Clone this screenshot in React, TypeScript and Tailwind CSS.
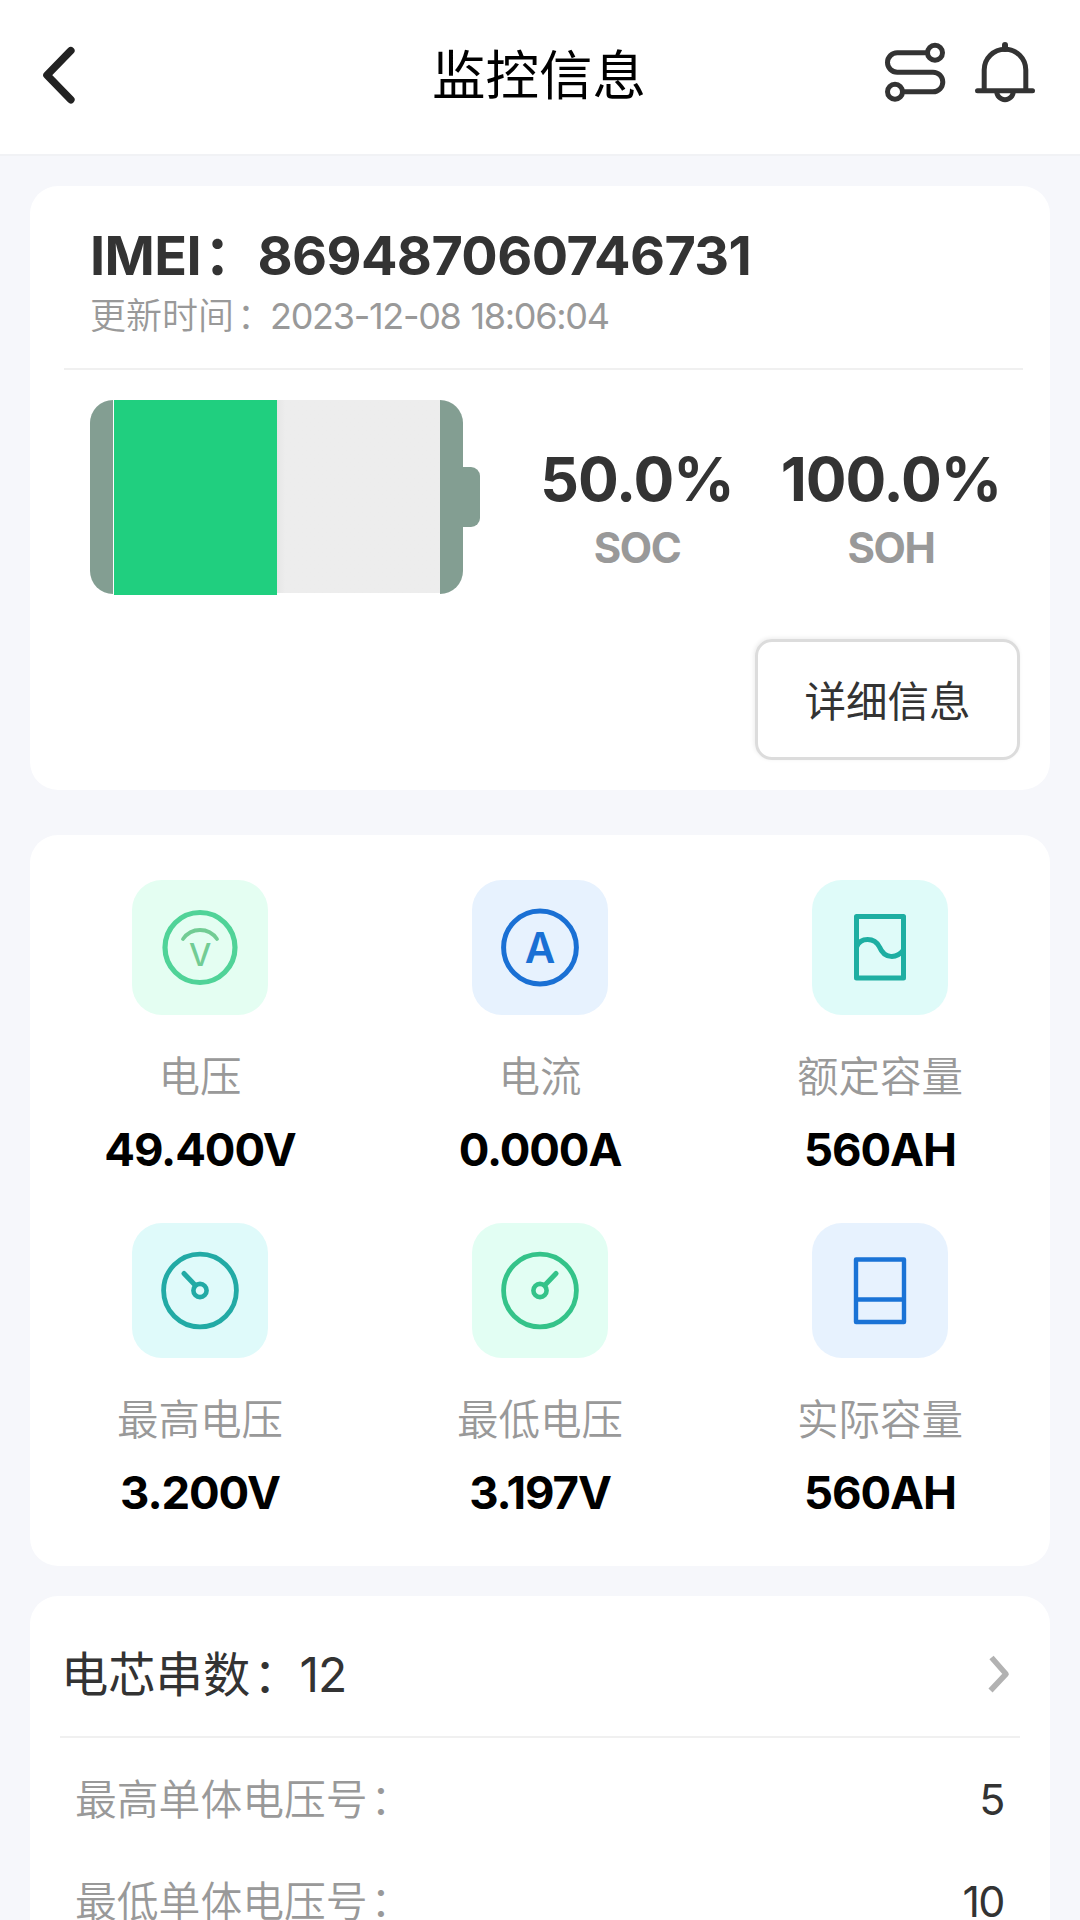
import React from "react";

type Metric = {
  label: string;
  value: string;
  tile: string;
  icon: React.ReactNode;
};

const metrics: Metric[] = [
  {
    label: "电压",
    value: "49.400V",
    tile: "bg-[#e4fef2]",
    icon: <VoltageIcon />,
  },
  {
    label: "电流",
    value: "0.000A",
    tile: "bg-[#e7f2fe]",
    icon: <CurrentIcon />,
  },
  {
    label: "额定容量",
    value: "560AH",
    tile: "bg-[#dffbf9]",
    icon: <RatedIcon />,
  },
  {
    label: "最高电压",
    value: "3.200V",
    tile: "bg-[#dffafa]",
    icon: <GaugeIcon color="#22aaa5" />,
  },
  {
    label: "最低电压",
    value: "3.197V",
    tile: "bg-[#e2fef3]",
    icon: <GaugeIcon color="#34c389" flip />,
  },
  {
    label: "实际容量",
    value: "560AH",
    tile: "bg-[#e7f2fe]",
    icon: <ActualIcon />,
  },
];

const cells = [
  { label: "最高单体电压号", value: "5" },
  { label: "最低单体电压号", value: "10" },
];

function VoltageIcon() {
  return (
    <svg width="136" height="135" viewBox="0 0 136 135" fill="none">
      <circle cx="68" cy="67.5" r="35" stroke="#50d398" strokeWidth="5.2" />
      <path
        d="M51 59C59.5 47 76.5 47 85 59"
        stroke="#72cc94"
        strokeWidth="3.8"
        strokeLinecap="round"
      />
      <text x="68.2" y="86.2" textAnchor="middle" fontSize="31.5" fontWeight="500" fill="#72cc94">
        V
      </text>
    </svg>
  );
}

function CurrentIcon() {
  return (
    <svg width="136" height="135" viewBox="0 0 136 135" fill="none">
      <circle cx="68" cy="67.5" r="36.4" stroke="#1a70d4" strokeWidth="5" />
      <text x="68" y="83" textAnchor="middle" fontSize="42" fontWeight="600" fill="#1a70d4">
        A
      </text>
    </svg>
  );
}

function RatedIcon() {
  return (
    <svg width="136" height="135" viewBox="0 0 136 135" fill="none" stroke="#1eaea2" strokeWidth="5" strokeLinejoin="round">
      <rect x="44.5" y="36.5" width="47" height="61.5" />
      <path d="M44.5 67C48.5 57 62.5 57 67.5 67C72.5 79 84.5 79 91.5 70" />
    </svg>
  );
}

function ActualIcon() {
  return (
    <svg width="136" height="135" viewBox="0 0 136 135" fill="none" stroke="#1a73d6" strokeWidth="4.4" strokeLinejoin="round">
      <rect x="44" y="36.5" width="48" height="62.5" />
      <path d="M44 76.5H92" />
    </svg>
  );
}

function GaugeIcon({ color, flip }: { color: string; flip?: boolean }) {
  return (
    <svg
      width="136"
      height="135"
      viewBox="0 0 136 135"
      fill="none"
      stroke={color}
      strokeLinecap="round"
      className={flip ? "-scale-x-100" : ""}
    >
      <circle cx="68" cy="67.5" r="36.4" strokeWidth="4.8" />
      <circle cx="68" cy="67.5" r="6.6" strokeWidth="4.6" />
      <path d="M52 50.5L63 62" strokeWidth="5" />
    </svg>
  );
}

function Colon() {
  return <span className="ml-[3px] mr-[-3px] inline-block">：</span>;
}

function Header() {
  return (
    <header className="flex h-[156px] items-start justify-between border-b-2 border-[#f1f2f5] bg-white pl-[38px] pr-[42px] pt-[38px]">
      <div className="w-[160px]">
        <svg width="40" height="74" viewBox="0 0 40 74" fill="none">
          <path
            d="M32.8 12.7L9 37.2L32.8 61.7"
            stroke="#222"
            strokeWidth="7.6"
            strokeLinecap="round"
            strokeLinejoin="round"
          />
        </svg>
      </div>
      <h1 className="pt-px text-[53.5px] leading-[74px] text-black">监控信息</h1>
      <div className="flex w-[158px] gap-[24px] pl-[2px]">
        <svg width="66" height="74" viewBox="0 0 66 74" fill="none" stroke="#333" strokeWidth="5">
          <circle cx="53" cy="14.8" r="7.5" />
          <circle cx="13" cy="53.8" r="7.5" />
          <path d="M45.5 14.8H15.2A9.7 9.7 0 0 0 15.2 34.2H51A9.8 9.8 0 0 1 51 53.8H20.5" />
        </svg>
        <svg width="66" height="74" viewBox="0 0 66 74" fill="none" stroke="#333" strokeWidth="5">
          <path d="M5.5 52.8H60.5" strokeLinecap="round" />
          <path d="M12.2 52.8V32A20.8 20.8 0 0 1 53.8 32V52.8" />
          <path d="M33 7V11" strokeWidth="6" strokeLinecap="round" />
          <path d="M24.8 53.5A8.2 8.2 0 0 0 41.2 53.5" />
        </svg>
      </div>
    </header>
  );
}

function Battery({ percent }: { percent: number }) {
  return (
    <div className="flex h-[195px] items-start">
      <div className="mr-px h-[194px] w-[23px] rounded-l-[23px] bg-[#839e92]" />
      <div className="flex h-[195px] w-[326px] items-start">
        <div className="h-[195px] bg-[#20cf7f]" style={{ width: `${percent}%` }} />
        <div className="h-[193px] flex-1 bg-gradient-to-r from-[#e6e6e6] to-[#ededed] to-[5%]" />
      </div>
      <div className="h-[194px] w-[23px] rounded-r-[23px] bg-[#839e92]" />
      <div className="mt-[67px] h-[60px] w-[17px] rounded-r-[9px] bg-[#839e92]" />
    </div>
  );
}

function App() {
  return (
    <div className="h-[1920px] w-[1080px] overflow-hidden bg-[#f6f7fb] font-['Inter','Noto_Sans_CJK_SC',sans-serif]">
      <Header />

      <section className="mx-[30px] mt-[30px] h-[604px] rounded-[28px] bg-white">
        <div className="h-[182px] pl-[60px] pt-[38px]">
          <p className="whitespace-nowrap text-[54px] font-bold leading-[64px] tracking-[-0.6px] text-[#333]">
            IMEI
            <Colon />
            <span className="ml-[3px]">869487060746731</span>
          </p>
          <p className="whitespace-nowrap pt-px text-[36px] font-[350] leading-[54px] text-[#999]">
            更新时间
            <Colon />
            <span className="font-normal tracking-[-1.3px] [word-spacing:1px]">2023-12-08 18:06:04</span>
          </p>
        </div>
        <div className="ml-[34px] mr-[27px] h-[2px] bg-[#f0f0f0]" />

        <div className="mt-[30px] flex pl-[60px]">
          <Battery percent={50} />
          <div className="ml-[47px] flex pt-[43px] text-center">
            <div className="w-[220px]">
              <p className="text-[60.5px] font-bold leading-[72px] tracking-[-1px] text-[#333]">50.0%</p>
              <p className="text-[42px] font-bold leading-[66px] tracking-[-1.4px] text-[#999]">SOC</p>
            </div>
            <div className="ml-[14px] w-[260px]">
              <p className="text-[60.5px] font-bold leading-[72px] tracking-[-1px] text-[#333]">100.0%</p>
              <p className="text-[42px] font-bold leading-[66px] tracking-[-1.4px] text-[#999]">SOH</p>
            </div>
          </div>
        </div>

        <div className="mt-[44px] flex justify-end pr-[30px]">
          <button className="h-[121px] w-[265px] rounded-[17px] border-[3px] border-[#dcdcdc] pt-[6px] text-[41.5px] text-[#333] shadow-[-1px_-1px_4px_rgba(0,0,0,0.08)]">
            详细信息
          </button>
        </div>
      </section>

      <section className="mx-[30px] mt-[45px] grid h-[731px] grid-cols-3 content-start rounded-[28px] bg-white pt-[45px]">
        {metrics.map((item) => (
          <div key={item.label} className="flex h-[343px] flex-col items-center">
            <div className={`h-[135px] w-[136px] rounded-[30px] ${item.tile}`}>{item.icon}</div>
            <p className="mt-[32px] text-[41.5px] font-[350] leading-[60px] text-[#999]">{item.label}</p>
            <p className="mt-[13px] text-[45.5px] font-bold leading-[60px] tracking-[-1.1px] text-black">
              {item.value}
            </p>
          </div>
        ))}
      </section>

      <section className="mx-[30px] mt-[30px] h-[360px] rounded-t-[28px] bg-white px-[30px]">
        <div className="flex h-[142px] items-center justify-between border-b-2 border-[#f0f0f0] pt-[18px]">
          <p className="pl-px text-[47.3px] leading-[60px] text-[#333]">
            电芯串数
            <Colon />
            <span className="ml-[2px] text-[48px] tracking-[-1px]">12</span>
          </p>
          <svg width="40" height="44" viewBox="0 0 40 44" fill="none" className="mb-[3px]">
            <path d="M11.5 5.5L26 22L10.5 38.5" stroke="#b2b2b2" strokeWidth="5.6" strokeLinejoin="round" />
          </svg>
        </div>
        <div className="pt-[11px]">
          {cells.map((cell) => (
            <div key={cell.label} className="flex h-[102px] items-center justify-between pl-[15px] pr-[16px]">
              <p className="text-[41.8px] font-[350] leading-[60px] text-[#999]">
                {cell.label}
                <Colon />
              </p>
              <p className="pb-[3px] text-[43px] leading-[60px] tracking-[-1.5px] text-[#333]">{cell.value}</p>
            </div>
          ))}
        </div>
      </section>
    </div>
  );
}

export default App;
